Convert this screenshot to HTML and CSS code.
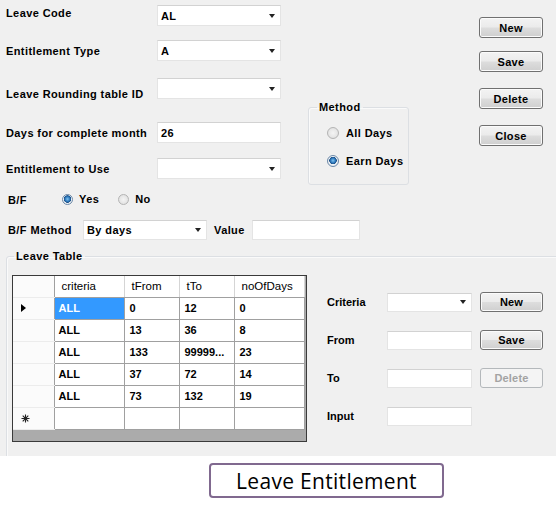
FILE: index.html
```html
<!DOCTYPE html>
<html>
<head>
<meta charset="utf-8">
<link rel="stylesheet" href="styles.css">
</head>
<body>
<div class="form">
  <div class="top">
    <div class="fields">
      <div class="row r-code"><span class="lbl lbl-up">Leave Code</span><div class="combo">AL</div></div>
      <div class="row r-type"><span class="lbl">Entitlement Type</span><div class="combo">A</div></div>
      <div class="row r-round"><span class="lbl lbl-down">Leave Rounding table ID</span><div class="combo"></div></div>
      <div class="row r-days"><span class="lbl">Days for complete month</span><div class="text">26</div></div>
      <div class="row r-use"><span class="lbl">Entitlement to Use</span><div class="combo"></div></div>
    </div>
    <fieldset class="method">
      <legend>Method</legend>
      <div class="opt"><span class="radio"></span>All Days</div>
      <div class="opt opt2"><span class="radio on"></span>Earn Days</div>
    </fieldset>
    <div class="stack">
      <div class="btn">New</div>
      <div class="btn btn-save">Save</div>
      <div class="btn">Delete</div>
      <div class="btn">Close</div>
    </div>
  </div>
  <div class="bf-row">
    <span class="bf-lbl">B/F</span>
    <span class="opt-inline"><span class="radio on"></span>Yes</span>
    <span class="opt-inline"><span class="radio"></span>No</span>
  </div>
  <div class="bfm-row">
    <span class="bfm-lbl">B/F Method</span>
    <div class="combo">By days</div>
    <span class="val-lbl">Value</span>
    <div class="text val-box"></div>
  </div>
  <fieldset class="ltable">
    <legend>Leave Table</legend>
    <div class="ltable-body">
      <div class="dg">
        <table>
          <colgroup><col class="c0"><col class="c1"><col class="c2"><col class="c3"><col class="c4"></colgroup>
          <thead>
            <tr><th class="rh"></th><th>criteria</th><th>tFrom</th><th>tTo</th><th>noOfDays</th></tr>
          </thead>
          <tbody>
            <tr><td class="rh"><span class="cur"></span></td><td class="sel">ALL</td><td>0</td><td>12</td><td>0</td></tr>
            <tr><td class="rh"></td><td>ALL</td><td>13</td><td>36</td><td>8</td></tr>
            <tr><td class="rh"></td><td>ALL</td><td>133</td><td>99999...</td><td>23</td></tr>
            <tr><td class="rh"></td><td>ALL</td><td>37</td><td>72</td><td>14</td></tr>
            <tr><td class="rh"></td><td>ALL</td><td>73</td><td>132</td><td>19</td></tr>
            <tr><td class="rh"><svg class="star" width="9" height="9" viewBox="0 0 9 9"><path d="M4.5 0.5V8.5M0.5 4.5H8.5M1.7 1.7L7.3 7.3M7.3 1.7L1.7 7.3" stroke="#222" stroke-width="1.1" fill="none"/></svg></td><td></td><td></td><td></td><td></td></tr>
          </tbody>
        </table>
      </div>
      <div class="side">
        <span class="slbl">Criteria</span><div class="combo small"></div><div class="btn">New</div>
        <span class="slbl">From</span><div class="text small"></div><div class="btn">Save</div>
        <span class="slbl">To</span><div class="text small"></div><div class="btn disabled">Delete</div>
        <span class="slbl">Input</span><div class="text small"></div><span></span>
      </div>
    </div>
  </fieldset>
</div>
<div class="caption-wrap">
  <div class="caption">Leave Entitlement</div>
</div>
</body>
</html>
```

FILE: styles.css
```css
* { box-sizing: border-box; }

body {
  margin: 0;
  background: #ffffff;
  font: bold 11px "Liberation Sans", Arial, sans-serif;
  letter-spacing: 0.4px;
  color: #000;
}

.form {
  height: 456px;
  background: #f0f0f0;
  overflow: hidden;
}

.top {
  display: flex;
  align-items: flex-start;
  height: 186px;
}

.fields {
  width: 281px;
  flex: none;
  padding: 5px 0 0 6px;
  display: flex;
  flex-direction: column;
}

.row {
  display: flex;
  align-items: center;
  height: 21px;
}
.r-type { margin-top: 14px; }
.r-round { margin-top: 17px; }
.r-days { margin-top: 23px; }
.r-use { margin-top: 15px; }

.lbl { width: 151px; flex: none; }
.lbl-up { position: relative; top: -3px; }
.lbl-down { position: relative; top: 5px; }

.combo, .text {
  width: 124px;
  height: 21px;
  flex: none;
  background: #fff;
  border: 1px solid #e4e4e4;
  border-top-color: #d2d2d2;
  display: flex;
  align-items: center;
  padding-left: 3px;
}
.combo::after {
  content: "";
  margin-left: auto;
  border-left: 3.5px solid transparent;
  border-right: 3.5px solid transparent;
  border-top: 4px solid #222;
  margin-right: 5px;
}

.method {
  margin: 101px 0 0 27px;
  width: 101px;
  padding: 11px 0 15px 18px;
  border: 1px solid #dcdfe3;
  border-radius: 3px;
  box-shadow: inset 1px 1px 0 #fafafa;
}
.method legend {
  padding: 0 2px;
  margin-left: -10px;
  line-height: 13px;
}

.opt {
  display: flex;
  align-items: center;
  height: 16px;
  gap: 7px;
}
.opt2 { margin-top: 12px; }

.radio {
  width: 12px;
  height: 12px;
  flex: none;
  border-radius: 50%;
  border: 1px solid #b4b4b4;
  background: radial-gradient(circle at 50% 50%, #f4f4f4 0, #e6e6e6 60%, #d4d4d4 100%);
}
.radio.on {
  border-color: #6d89a8;
  background: radial-gradient(circle at 50% 45%, #7fc3f0 0, #2a74b8 2.5px, #1d4f84 3.5px, #eef2f6 4px, #dfe4ea 100%);
}

.stack {
  margin-left: 70px;
  padding-top: 17px;
  display: flex;
  flex-direction: column;
}
.stack .btn + .btn { margin-top: 16px; }
.stack .btn-save { margin-top: 13px !important; }

.btn {
  width: 64px;
  height: 21px;
  border: 1px solid #707070;
  border-radius: 3px;
  background: linear-gradient(#f3f3f3 0%, #ebebeb 48%, #dddddd 52%, #cfcfcf 100%);
  box-shadow: inset 0 0 0 1px #fbfbfb;
  display: flex;
  align-items: center;
  justify-content: center;
  letter-spacing: 0.3px;
}
.btn.disabled {
  border-color: #b4b8bb;
  background: #f4f4f4;
  box-shadow: none;
  color: #a3a3a3;
}

.bf-row {
  margin-top: 4px;
  height: 18px;
  padding-left: 8px;
  display: flex;
  align-items: center;
}
.bf-lbl { width: 54px; position: relative; top: 1px; }
.opt-inline {
  display: flex;
  align-items: center;
  gap: 6px;
  margin-right: 19px;
}
.opt-inline .radio { width: 11px; height: 11px; }

.bfm-row {
  margin-top: 12px;
  height: 20px;
  padding-left: 8px;
  display: flex;
  align-items: center;
}
.bfm-row .combo { height: 20px; }
.bfm-lbl { width: 75px; flex: none; }
.val-lbl { margin-left: 7px; width: 38px; }
.val-box { width: 108px; height: 20px; }

.ltable {
  margin: 10px 0 0 6px;
  width: 560px;
  padding: 12px 0 0 5px;
  border: 1px solid #dcdfe3;
  border-radius: 3px;
  box-shadow: inset 1px 1px 0 #fafafa;
  min-height: 220px;
}
.ltable legend {
  padding: 0 2px;
  margin-left: 2px;
  line-height: 13px;
}

.ltable-body {
  display: flex;
  align-items: flex-start;
}

.dg {
  width: 295px;
  height: 167px;
  flex: none;
  border: 1px solid #3a3a3a;
  background: #ababab;
  letter-spacing: 0;
}
.dg table {
  border-collapse: collapse;
  table-layout: fixed;
  width: 291px;
  background: #fff;
}
.c0 { width: 41px; }
.c1 { width: 70px; }
.c2 { width: 55px; }
.c3 { width: 55px; }
.c4 { width: 70px; }

.dg th {
  height: 21px;
  padding: 0 0 0 7px;
  text-align: left;
  font-weight: normal;
  font-size: 11.5px;
  background: #fff;
  border-right: 1px solid #d5d5d5;
  border-bottom: 1px solid #a0a0a0;
}
.dg td {
  height: 22px;
  padding: 0 0 0 5px;
  border-right: 1px solid #a0a0a0;
  border-bottom: 1px solid #a0a0a0;
  white-space: nowrap;
  overflow: hidden;
}
.dg td:first-child + td { padding-left: 4px; }
.dg .rh {
  background: #fbfbfb;
  border-bottom-color: #ececec;
  border-right: 1px solid #a0a0a0;
  padding-left: 8px;
}
.dg td.sel {
  background: #3399ff;
  color: #fff;
}
.cur {
  display: block;
  width: 0;
  height: 0;
  border-top: 4px solid transparent;
  border-bottom: 4px solid transparent;
  border-left: 5px solid #000;
}
.star { display: block; }

.side {
  margin: 17px 0 0 20px;
  display: grid;
  grid-template-columns: 60px 93px 63px;
  grid-auto-rows: 20px;
  row-gap: 18px;
  align-items: center;
}
.slbl { letter-spacing: 0; }
.side .small { width: 85px; height: 19px; }
.side .btn { width: 63px; height: 20px; letter-spacing: 0.2px; }

.caption-wrap {
  padding: 7px 0 0 209px;
}
.caption {
  width: 235px;
  height: 35px;
  border: 2px solid #80698f;
  border-radius: 4px;
  display: flex;
  align-items: center;
  justify-content: center;
  font: normal 21px "Open Sans", "Liberation Sans", sans-serif;
  letter-spacing: 0.3px;
  color: #000;
}
```
